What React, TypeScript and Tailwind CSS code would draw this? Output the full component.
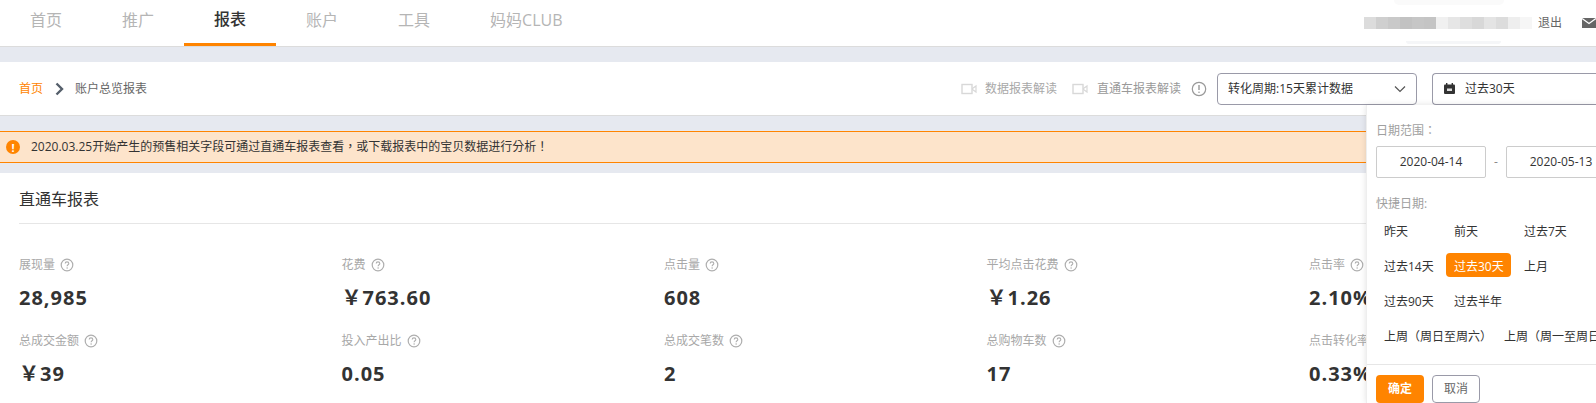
import React from "react";

const FONT = "font-['Open_Sans','Noto_Sans_CJK_SC',sans-serif]";
const TC = "font-['Open_Sans','Noto_Sans_CJK_TC',sans-serif]";

function Q() {
  return (
    <svg width="14" height="14" viewBox="0 0 14 14" className="ml-[5px] shrink-0" fill="none">
      <circle cx="7" cy="7" r="5.8" stroke="#aeaeae" strokeWidth="1.2" />
      <path d="M5.2 5.6c0-1 .8-1.7 1.8-1.7s1.8.7 1.8 1.6c0 1.3-1.7 1.3-1.7 2.7" stroke="#aeaeae" strokeWidth="1.1" />
      <circle cx="7.1" cy="10" r=".75" fill="#aeaeae" />
    </svg>
  );
}

function Video() {
  return (
    <svg width="16" height="12" viewBox="0 0 16 12" fill="none" className="shrink-0">
      <rect x="1" y="1.5" width="10" height="9" stroke="#d8d8d8" strokeWidth="1.4" />
      <path d="M11.5 5.5l3.5-2.5v6l-3.5-2.5z" stroke="#d8d8d8" strokeWidth="1.2" />
    </svg>
  );
}

const metrics = [
  [["展现量", "28,985"], ["花费", "￥763.60"], ["点击量", "608"], ["平均点击花费", "￥1.26"], ["点击率", "2.10%"]],
  [["总成交金额", "￥39"], ["投入产出比", "0.05"], ["总成交笔数", "2"], ["总购物车数", "17"], ["点击转化率", "0.33%"]],
];

const blur = [
  "bg-[#dcdcdc]", "bg-[#cfcfcf]", "bg-[#c9c9c9]", "bg-[#c2c2c2]", "bg-[#c6c6c6]", "bg-[#c4c4c4]",
  "bg-[#f0f0f0]", "bg-[#e6e6e6]", "bg-[#dedede]", "bg-[#d8d8d8]", "bg-[#e4e4e4]", "bg-[#dcdcdc]", "bg-[#eeeeee]", "bg-[#f6f6f6]",
];

const quick = [
  [["昨天", false], ["前天", false], ["过去7天", false]],
  [["过去14天", false], ["过去30天", true], ["上月", false]],
  [["过去90天", false], ["过去半年", false]],
] as const;

export default function App() {
  return (
    <div className={`relative h-[403px] w-[1596px] overflow-hidden bg-white text-[12px] ${FONT}`}>
      <header className="flex h-[47px] items-start justify-between border-b border-[#dcdcdc] bg-white">
        <nav className="flex h-[46px]">
          {["首页", "推广", "报表", "账户", "工具", "妈妈CLUB"].map((t) => (
            <div
              key={t}
              className={
                t === "报表"
                  ? "flex h-[46px] items-center border-b-[3px] border-[#ff8400] px-[30px] pb-[6px] text-[16px] font-medium text-[#333333]"
                  : "flex h-[46px] items-center px-[30px] pb-[6px] text-[16px] text-[#b5b5b5]"
              }
            >
              {t}
            </div>
          ))}
        </nav>
        <div className="relative flex items-center pt-[17px]">
          <div className="absolute left-[30px] top-0 h-[5px] w-[110px] rounded-b-[40px] bg-[#fafafa]" />
          <div className="absolute left-[42px] top-[41px] h-[3px] w-[95px] rounded-b-[20px] bg-[#f5f6f8]" />
          <div className="flex h-[12px] w-[168px]">
            {blur.map((c, i) => (
              <div key={i} className={`h-[12px] w-[12px] ${c}`} />
            ))}
          </div>
          <span className="ml-[6px] text-[12px] leading-[12px] text-[#666666]">退出</span>
          <svg width="14" height="10" viewBox="0 0 14 10" className="ml-[20px] shrink-0">
            <rect width="14" height="10" fill="#666666" />
            <path d="M0 .5l7 5 7-5" stroke="#ffffff" strokeWidth="1.3" fill="none" />
          </svg>
        </div>
      </header>

      <div className="h-[15px] bg-[#e6e9f0]" />

      <section className="flex h-[54px] items-center justify-between border-b border-[#dcdcdc] bg-white pl-[19px]">
        <div className="flex items-center">
          <span className="text-[#ff8400]">首页</span>
          <svg width="10" height="14" viewBox="0 0 10 14" className="ml-[12px]" fill="none">
            <path d="M1.5 1.5L7 7l-5.5 5.5" stroke="#555f6b" strokeWidth="2.4" />
          </svg>
          <span className="ml-[10px] text-[#666666]">账户总览报表</span>
        </div>
        <div className="flex items-center">
          <Video />
          <span className="ml-[8px] text-[#a8a8a8]">数据报表解读</span>
          <div className="ml-[15px]"><Video /></div>
          <span className="ml-[9px] text-[#999999]">直通车报表解读</span>
          <svg width="16" height="16" viewBox="0 0 16 16" className="ml-[10px]" fill="none">
            <circle cx="8" cy="8" r="6.7" stroke="#999999" strokeWidth="1.2" />
            <path d="M8 4v5" stroke="#999999" strokeWidth="1.4" />
            <circle cx="8" cy="11.2" r=".8" fill="#999999" />
          </svg>
          <div className="ml-[10px] flex h-[32px] w-[200px] items-center justify-between rounded-[4px] border border-[#9a9aa8] pl-[10px] pr-[10px] text-[#333333]">
            <span>转化周期:15天累计数据</span>
            <svg width="12" height="8" viewBox="0 0 12 8" fill="none">
              <path d="M1 1.5l5 5 5-5" stroke="#555555" strokeWidth="1.2" />
            </svg>
          </div>
          <div className="ml-[15px] flex h-[32px] w-[164px] items-center rounded-l-[4px] border border-r-0 border-[#9a9aa8] pl-[11px] text-[#333333]">
            <svg width="11" height="11" viewBox="0 0 11 11">
              <rect y="1.5" width="11" height="9.5" rx="1" fill="#333333" />
              <rect x="2" y="0" width="1.4" height="3" fill="#333333" />
              <rect x="7.6" y="0" width="1.4" height="3" fill="#333333" />
              <rect x="3" y="5.5" width="5" height="2.5" fill="#dddddd" />
            </svg>
            <span className="ml-[10px]">过去30天</span>
          </div>
        </div>
      </section>

      <div className="h-[15px] bg-[#e6e9f0]" />

      <div className="flex h-[32px] items-center border-y border-[#ff8400] bg-[#fde4cb] pl-[6px] text-[#333333]">
        <span className="flex h-[14px] w-[14px] items-center justify-center rounded-full bg-[#ff8400] text-[11px] font-bold leading-none text-white">!</span>
        <span className={`ml-[11px] ${TC}`}>2020.03.25开始产生的预售相关字段可通过直通车报表查看，或下载报表中的宝贝数据进行分析！</span>
      </div>

      <div className="h-[10px] bg-[#e6e9f0]" />

      <main className="bg-white pl-[19px]">
        <h2 className="flex h-[51px] items-center border-b border-[#e6e6e6] pt-[2px] text-[16px] font-normal text-[#333333]">直通车报表</h2>
        <div className="pt-[32px]">
          {metrics.map((row, r) => (
            <div key={r} className={r === 0 ? "flex h-[76px]" : "flex"}>
              {row.map(([label, value]) => (
                <div key={label} className="w-[322.5px] shrink-0">
                  <div className="flex h-[18px] items-center text-[#a8a8a8]">
                    {label}
                    <Q />
                  </div>
                  <div className="mt-[10px] h-[28px] text-[20px] font-bold leading-[28px] tracking-[1px] text-[#333333]">{value}</div>
                </div>
              ))}
            </div>
          ))}
        </div>
      </main>

      <aside className="absolute left-[1366px] top-[105px] h-[298px] w-[230px] border-l border-[#eeeeee] bg-white shadow-[0_0_6px_rgba(0,0,0,0.12)]">
        <div className="pl-[9px] pt-[17px]">
          <div className={`h-[18px] leading-[18px] text-[#a0a0a0] ${TC}`}>日期范围：</div>
          <div className="mt-[6px] flex items-center">
            <div className="flex h-[32px] w-[110px] shrink-0 items-center justify-center rounded-[2px] border border-[#cccccc] text-[#333333]">2020-04-14</div>
            <span className="w-[20px] shrink-0 text-center text-[#888888]">-</span>
            <div className="flex h-[32px] w-[110px] shrink-0 items-center justify-center rounded-[2px] border border-[#cccccc] text-[#333333]">2020-05-13</div>
          </div>
          <div className="mt-[17px] h-[18px] leading-[18px] text-[#a0a0a0]">快捷日期:</div>
          <div className="mt-[5px] flex flex-col gap-[11px]">
            {quick.map((row, i) => (
              <div key={i} className="flex h-[24px] gap-[5px]">
                {row.map(([t, on]) => (
                  <div
                    key={t}
                    className={
                      on
                        ? "flex h-[24px] w-[65px] items-center rounded-[4px] bg-[#ff8400] pl-[8px] pt-[4px] text-white"
                        : "flex h-[24px] w-[65px] items-center whitespace-nowrap pl-[8px] pt-[4px] text-[#333333]"
                    }
                  >
                    {t}
                  </div>
                ))}
              </div>
            ))}
            <div className={`flex h-[24px] items-center whitespace-nowrap pl-[8px] pt-[4px] text-[#333333] ${TC}`}>
              <span className="w-[120px] shrink-0">上周（周日至周六）</span>
              <span>上周（周一至周日）</span>
            </div>
          </div>
        </div>
        <div className="mt-[17px] flex gap-[8px] border-t border-[#e6e6e6] pl-[9px] pt-[10px]">
          <div className="flex h-[28px] w-[48px] items-center justify-center rounded-[4px] bg-[#ff8400] font-bold text-white">确定</div>
          <div className="flex h-[28px] w-[48px] items-center justify-center rounded-[4px] border border-[#9a9aa8] text-[#666666]">取消</div>
        </div>
      </aside>
    </div>
  );
}
